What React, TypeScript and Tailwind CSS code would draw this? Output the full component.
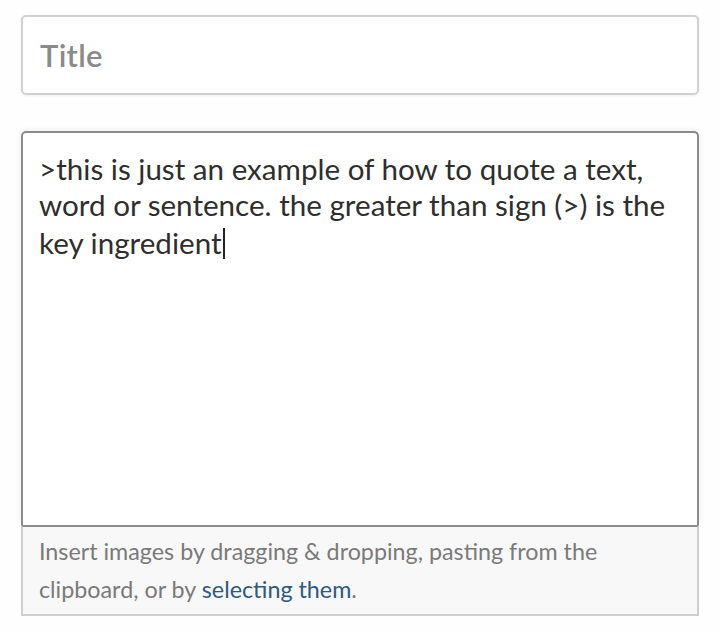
export default function App() {
  return (
    <div className="min-h-[631px] w-[720px] bg-[#fefefe] px-[21px] pt-[15px] font-['Lato',sans-serif]">
      <div className="flex h-[80px] items-center rounded-[5px] border-2 border-[#d0d0d0] bg-white px-[17px] shadow-[0_1px_3px_rgba(0,0,0,0.06)]">
        <span className="text-[31px] font-semibold tracking-[0.3px] text-[#8a8a8a]">Title</span>
      </div>
      <div className="mt-[36px] flex flex-col">
        <div className="h-[394px] rounded-t-[5px] border-2 border-b-0 border-[#8c8c8c] bg-white pr-[20px] pl-[16px] pt-[18px] text-[29.6px] leading-[36px] text-[#2e2e2e] shadow-[0_0_6px_rgba(0,0,0,0.08)]">
          &gt;this is just an example of how to quote a text, word or sentence. the greater than sign (&gt;) is the key ingredient
          <span className="ml-[1px] inline-block h-[31px] w-[2px] translate-y-[5px] bg-[#222]" />
        </div>
        <div className="border-2 border-t-2 border-[#cfcfcf] border-t-[#8c8c8c] bg-[#f8f8f8] pr-[60px] pl-[16px] pt-[5px] pb-[6px] text-[23.3px] leading-[38px] text-[#7a7a7a]">
          Insert images by dragging &amp; dropping, pasting from the clipboard, or by{' '}
          <span className="text-[#2b5a85]">selecting them</span>.
        </div>
      </div>
    </div>
  );
}
